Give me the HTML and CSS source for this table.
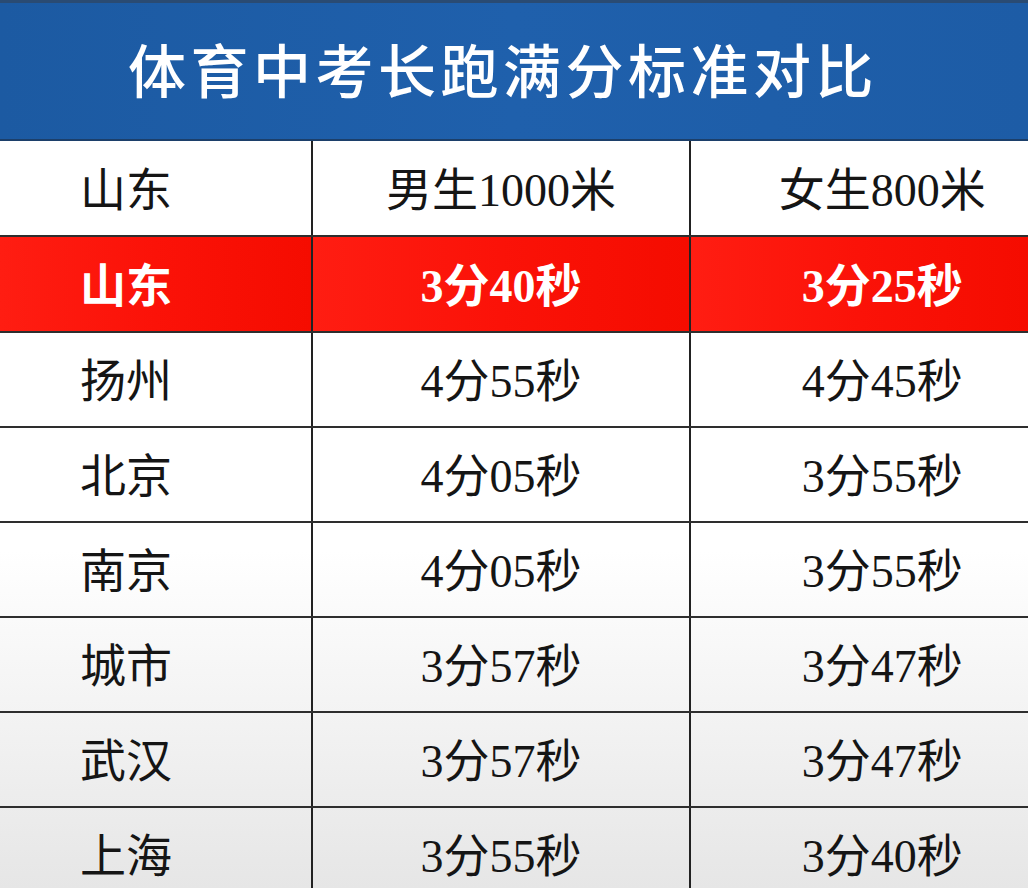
FILE: index.html
```html
<!DOCTYPE html>
<html lang="zh-CN">
<head>
<meta charset="utf-8">
<title>体育中考长跑满分标准对比</title>
<link rel="stylesheet" href="styles.css">
</head>
<body>
<div class="page">
  <header class="title">体育中考长跑满分标准对比</header>
  <table class="grid">
    <colgroup>
      <col class="c1"><col class="c2"><col class="c3">
    </colgroup>
    <tbody>
      <tr class="head-row"><td>山东</td><td>男生1000米</td><td>女生800米</td></tr>
      <tr class="hl"><td>山东</td><td>3分40秒</td><td>3分25秒</td></tr>
      <tr><td>扬州</td><td>4分55秒</td><td>4分45秒</td></tr>
      <tr><td>北京</td><td>4分05秒</td><td>3分55秒</td></tr>
      <tr><td>南京</td><td>4分05秒</td><td>3分55秒</td></tr>
      <tr><td>城市</td><td>3分57秒</td><td>3分47秒</td></tr>
      <tr><td>武汉</td><td>3分57秒</td><td>3分47秒</td></tr>
      <tr><td>上海</td><td>3分55秒</td><td>3分40秒</td></tr>
    </tbody>
  </table>
</div>
</body>
</html>
```
FILE: styles.css
```css
html, body {
  margin: 0;
  padding: 0;
  background: #ffffff;
}
.page {
  width: 1028px;
  height: 888px;
  overflow: hidden;
  background: linear-gradient(180deg, #ffffff 0%, #ffffff 62%, #e6e6e6 100%);
}
.title {
  box-sizing: border-box;
  height: 141px;
  border-top: 3px solid #2a4b73;
  border-bottom: 2px solid #1c3f6a;
  background: linear-gradient(90deg, #1c5aa2 0%, #1f60ac 50%, #1d5ca6 100%);
  color: #ffffff;
  font-family: "Noto Sans CJK SC", sans-serif;
  font-size: 58px;
  font-weight: 500;
  letter-spacing: 4.5px;
  display: flex;
  align-items: center;
  justify-content: center;
  padding-right: 22px;
  padding-bottom: 6px;
}
.grid {
  width: 1028px;
  border-collapse: collapse;
  table-layout: fixed;
  font-family: "Liberation Serif", "Noto Sans CJK SC", serif;
  font-size: 46px;
  color: #151515;
}
.c1 { width: 312px; }
.c2 { width: 378px; }
.c3 { width: 338px; }
.grid td {
  height: 87px;
  padding: 6px 0 0 0;
  border-bottom: 2px solid #2e2e2e;
  border-right: 2px solid #222222;
  text-align: center;
  vertical-align: middle;
  line-height: 1.1;
}
.grid .head-row td,
.grid .hl td {
  height: 88px;
}
.grid td:first-child {
  text-align: left;
  padding-left: 80px;
}
.grid td:last-child {
  border-right: 1px solid #cfcfcf;
  padding-left: 46px;
}
.head-row td {
  background: #ffffff;
}
.hl td {
  background: linear-gradient(90deg, #ff1d12 0%, #fb1208 50%, #f50c00 100%);
  color: #ffffff;
  font-weight: bold;
}
```
